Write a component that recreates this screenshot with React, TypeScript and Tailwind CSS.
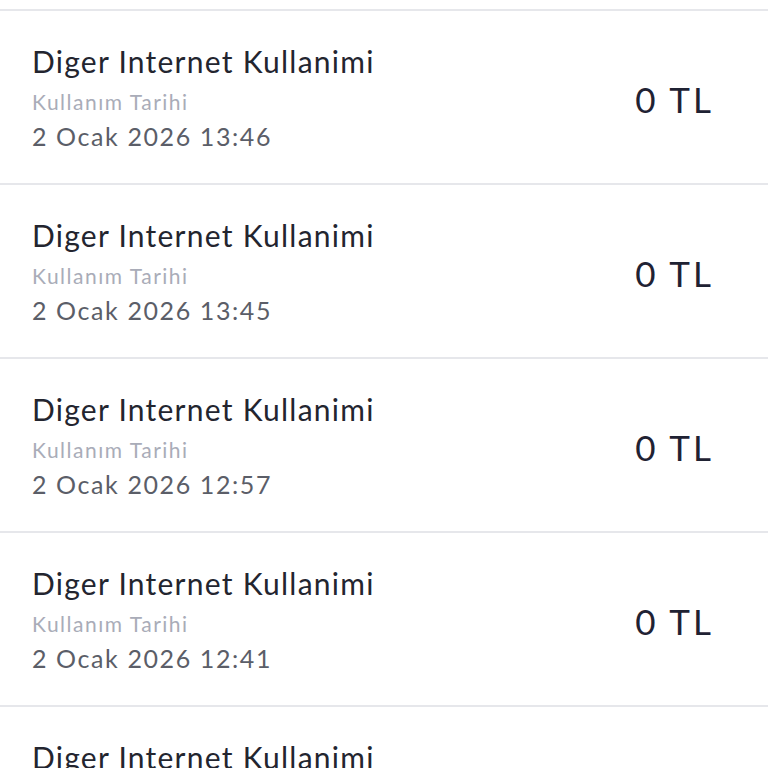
const rows = [
  { date: '2 Ocak 2026 13:46' },
  { date: '2 Ocak 2026 13:45' },
  { date: '2 Ocak 2026 12:57' },
  { date: '2 Ocak 2026 12:41' },
  { date: '2 Ocak 2026 12:30' },
]

export default function App() {
  return (
    <div className="h-[768px] overflow-hidden bg-white" style={{ fontFamily: 'Lato, "Noto Sans", sans-serif' }}>
      <div className="h-[11px] border-b-2 border-[#e6e7eb]" />
      {rows.map((r, i) => (
        <div key={i} className="flex items-center justify-between border-b-2 border-[#e6e7eb] pl-8 pr-[54px] pt-[32px] pb-[28px]">
          <div className="flex flex-col">
            <div className="text-[30px] leading-[36px] tracking-[1.25px] text-[#23252f]">Diger Internet Kullanimi</div>
            <div className="mt-2 text-[21px] leading-[30px] tracking-[1.5px] text-[#a9acb8]">Kullanım Tarihi</div>
            <div className="text-[25px] leading-[38px] tracking-[1.6px] text-[#5b5e68]">{r.date}</div>
          </div>
          <div className="text-[35px] leading-[40px] tracking-[3px] text-[#1f2233]">0 TL</div>
        </div>
      ))}
    </div>
  )
}
